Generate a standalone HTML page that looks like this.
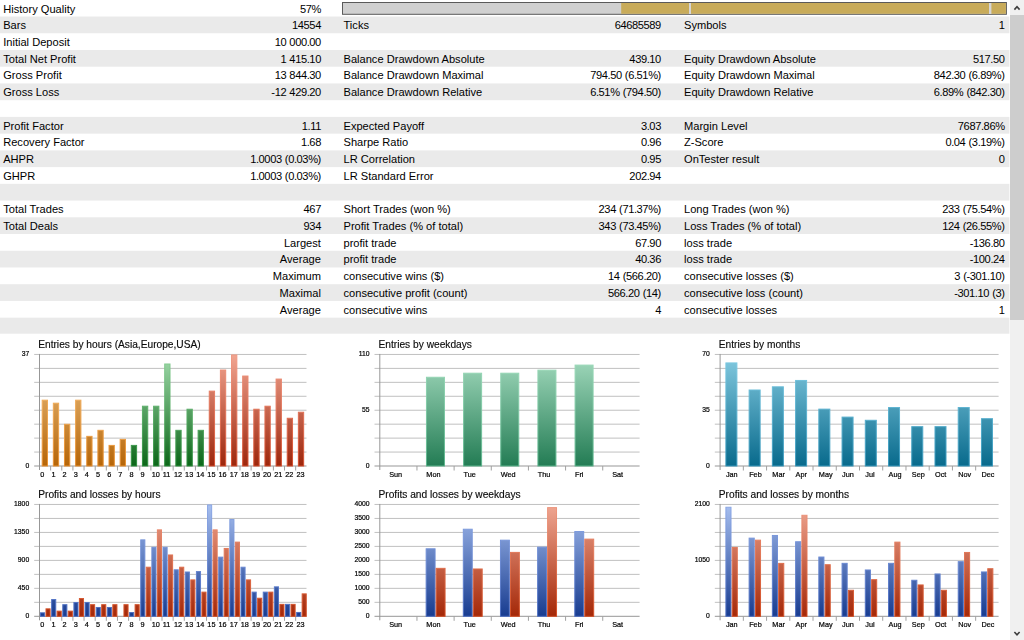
<!DOCTYPE html>
<html lang="en">
<head>
<meta charset="utf-8">
<title>Strategy Tester Report</title>
<style>
html,body{margin:0;padding:0;background:#fff;}
body{width:1024px;height:640px;overflow:hidden;position:relative;font-family:"Liberation Sans",Arial,sans-serif;color:#000;}
#gfx{position:absolute;left:0;top:0;width:1024px;height:640px;display:block;filter:blur(0.3px);}
#report{position:absolute;left:0;top:0;width:1024px;height:335px;font-size:11.1px;}
.row{position:absolute;left:0;width:1009px;height:16.73px;line-height:16.73px;white-space:nowrap;}
.row span{position:absolute;top:0.7px;}
.row .n{letter-spacing:-0.4px;word-spacing:0.5px;}
.ct{font-family:"Liberation Sans",Arial,sans-serif;font-size:10.2px;fill:#0c0c0c;stroke:#0c0c0c;stroke-width:0.15px;}
.yl{font-size:6.8px !important;}
.al{font-family:"Liberation Sans",Arial,sans-serif;font-size:7.3px;fill:#000;stroke:#000;stroke-width:0.2px;}
</style>
</head>
<body>
<svg id="gfx" width="1024" height="640" viewBox="0 0 1024 640">
<defs>
<linearGradient id="ora" gradientUnits="userSpaceOnUse" x1="0" y1="354" x2="0" y2="466"><stop offset="0" stop-color="#f2c88c"/><stop offset="1" stop-color="#b56508"/></linearGradient>
<linearGradient id="gra" gradientUnits="userSpaceOnUse" x1="0" y1="354" x2="0" y2="466"><stop offset="0" stop-color="#a4dcae"/><stop offset="1" stop-color="#0b6618"/></linearGradient>
<linearGradient id="rda" gradientUnits="userSpaceOnUse" x1="0" y1="354" x2="0" y2="466"><stop offset="0" stop-color="#f2a692"/><stop offset="1" stop-color="#9c260c"/></linearGradient>
<linearGradient id="wka" gradientUnits="userSpaceOnUse" x1="0" y1="354" x2="0" y2="466"><stop offset="0" stop-color="#a6dcc0"/><stop offset="1" stop-color="#237c54"/></linearGradient>
<linearGradient id="moa" gradientUnits="userSpaceOnUse" x1="0" y1="354" x2="0" y2="466"><stop offset="0" stop-color="#86cce2"/><stop offset="1" stop-color="#086a8c"/></linearGradient>
<linearGradient id="bla" gradientUnits="userSpaceOnUse" x1="0" y1="354" x2="0" y2="466"><stop offset="0" stop-color="#a8c0f0"/><stop offset="1" stop-color="#183c90"/></linearGradient>
<linearGradient id="lra" gradientUnits="userSpaceOnUse" x1="0" y1="354" x2="0" y2="466"><stop offset="0" stop-color="#f0a894"/><stop offset="1" stop-color="#a42808"/></linearGradient>
<linearGradient id="blSa" gradientUnits="userSpaceOnUse" x1="0" y1="354" x2="0" y2="466"><stop offset="0" stop-color="#8ca8e6"/><stop offset="1" stop-color="#4a6cc0"/></linearGradient>
<linearGradient id="lrSa" gradientUnits="userSpaceOnUse" x1="0" y1="354" x2="0" y2="466"><stop offset="0" stop-color="#ee9880"/><stop offset="1" stop-color="#d24c22"/></linearGradient>
<linearGradient id="orSa" gradientUnits="userSpaceOnUse" x1="0" y1="354" x2="0" y2="466"><stop offset="0" stop-color="#f6c078"/><stop offset="1" stop-color="#e89030"/></linearGradient>
<linearGradient id="grSa" gradientUnits="userSpaceOnUse" x1="0" y1="354" x2="0" y2="466"><stop offset="0" stop-color="#8cd098"/><stop offset="1" stop-color="#2c8c3c"/></linearGradient>
<linearGradient id="rdSa" gradientUnits="userSpaceOnUse" x1="0" y1="354" x2="0" y2="466"><stop offset="0" stop-color="#f09a84"/><stop offset="1" stop-color="#d44c2c"/></linearGradient>
<linearGradient id="wkSa" gradientUnits="userSpaceOnUse" x1="0" y1="354" x2="0" y2="466"><stop offset="0" stop-color="#a0dcbc"/><stop offset="1" stop-color="#5cb48c"/></linearGradient>
<linearGradient id="moSa" gradientUnits="userSpaceOnUse" x1="0" y1="354" x2="0" y2="466"><stop offset="0" stop-color="#80cce4"/><stop offset="1" stop-color="#3898bc"/></linearGradient>
<linearGradient id="orb" gradientUnits="userSpaceOnUse" x1="0" y1="504" x2="0" y2="616"><stop offset="0" stop-color="#f2c88c"/><stop offset="1" stop-color="#b56508"/></linearGradient>
<linearGradient id="grb" gradientUnits="userSpaceOnUse" x1="0" y1="504" x2="0" y2="616"><stop offset="0" stop-color="#a4dcae"/><stop offset="1" stop-color="#0b6618"/></linearGradient>
<linearGradient id="rdb" gradientUnits="userSpaceOnUse" x1="0" y1="504" x2="0" y2="616"><stop offset="0" stop-color="#f2a692"/><stop offset="1" stop-color="#9c260c"/></linearGradient>
<linearGradient id="wkb" gradientUnits="userSpaceOnUse" x1="0" y1="504" x2="0" y2="616"><stop offset="0" stop-color="#a6dcc0"/><stop offset="1" stop-color="#237c54"/></linearGradient>
<linearGradient id="mob" gradientUnits="userSpaceOnUse" x1="0" y1="504" x2="0" y2="616"><stop offset="0" stop-color="#86cce2"/><stop offset="1" stop-color="#086a8c"/></linearGradient>
<linearGradient id="blb" gradientUnits="userSpaceOnUse" x1="0" y1="504" x2="0" y2="616"><stop offset="0" stop-color="#a8c0f0"/><stop offset="1" stop-color="#183c90"/></linearGradient>
<linearGradient id="lrb" gradientUnits="userSpaceOnUse" x1="0" y1="504" x2="0" y2="616"><stop offset="0" stop-color="#f0a894"/><stop offset="1" stop-color="#a42808"/></linearGradient>
<linearGradient id="blSb" gradientUnits="userSpaceOnUse" x1="0" y1="504" x2="0" y2="616"><stop offset="0" stop-color="#8ca8e6"/><stop offset="1" stop-color="#4a6cc0"/></linearGradient>
<linearGradient id="lrSb" gradientUnits="userSpaceOnUse" x1="0" y1="504" x2="0" y2="616"><stop offset="0" stop-color="#ee9880"/><stop offset="1" stop-color="#d24c22"/></linearGradient>
<linearGradient id="orSb" gradientUnits="userSpaceOnUse" x1="0" y1="504" x2="0" y2="616"><stop offset="0" stop-color="#f6c078"/><stop offset="1" stop-color="#e89030"/></linearGradient>
<linearGradient id="grSb" gradientUnits="userSpaceOnUse" x1="0" y1="504" x2="0" y2="616"><stop offset="0" stop-color="#8cd098"/><stop offset="1" stop-color="#2c8c3c"/></linearGradient>
<linearGradient id="rdSb" gradientUnits="userSpaceOnUse" x1="0" y1="504" x2="0" y2="616"><stop offset="0" stop-color="#f09a84"/><stop offset="1" stop-color="#d44c2c"/></linearGradient>
<linearGradient id="wkSb" gradientUnits="userSpaceOnUse" x1="0" y1="504" x2="0" y2="616"><stop offset="0" stop-color="#a0dcbc"/><stop offset="1" stop-color="#5cb48c"/></linearGradient>
<linearGradient id="moSb" gradientUnits="userSpaceOnUse" x1="0" y1="504" x2="0" y2="616"><stop offset="0" stop-color="#80cce4"/><stop offset="1" stop-color="#3898bc"/></linearGradient>
</defs>
<rect x="0" y="16.53" width="1009.4" height="16.73" fill="#eaeaea"/>
<rect x="0" y="49.99" width="1009.4" height="16.73" fill="#eaeaea"/>
<rect x="0" y="83.45" width="1009.4" height="16.73" fill="#eaeaea"/>
<rect x="0" y="116.91" width="1009.4" height="16.73" fill="#eaeaea"/>
<rect x="0" y="150.37" width="1009.4" height="16.73" fill="#eaeaea"/>
<rect x="0" y="183.83" width="1009.4" height="16.73" fill="#eaeaea"/>
<rect x="0" y="217.29" width="1009.4" height="16.73" fill="#eaeaea"/>
<rect x="0" y="250.75" width="1009.4" height="16.73" fill="#eaeaea"/>
<rect x="0" y="284.21" width="1009.4" height="16.73" fill="#eaeaea"/>
<rect x="0" y="317.67" width="1009.4" height="16.03" fill="#eaeaea"/>
<rect x="342.5" y="2.5" width="663.9" height="11.8" fill="#d0d0d0" stroke="#5a5a5a" stroke-width="1"/>
<rect x="621.2" y="3" width="384.7" height="10.8" fill="#c8ab5a"/>
<rect x="689" y="3" width="2" height="11" fill="#d6d6d6"/>
<rect x="989" y="3" width="2.4" height="11" fill="#d6d6d6"/>
<rect x="1010" y="0" width="14" height="640" fill="#f0f0f0"/>
<rect x="1010" y="15" width="14" height="305" fill="#cdcdcd"/>
<path d="M1014.4 9.6 L1017 6.8 L1019.6 9.6" fill="none" stroke="#3c3c3c" stroke-width="1.6"/>
<path d="M1014.4 632 L1017 634.8 L1019.6 632" fill="none" stroke="#3c3c3c" stroke-width="1.6"/>
<text x="38.2" y="348.25" class="ct">Entries by hours (Asia,Europe,USA)</text>
<line x1="34.2" y1="354.45" x2="306.5" y2="354.45" stroke="#c0c0c0" stroke-width="1"/>
<line x1="34.2" y1="368.39" x2="306.5" y2="368.39" stroke="#c0c0c0" stroke-width="1"/>
<line x1="34.2" y1="382.34" x2="306.5" y2="382.34" stroke="#c0c0c0" stroke-width="1"/>
<line x1="34.2" y1="396.28" x2="306.5" y2="396.28" stroke="#c0c0c0" stroke-width="1"/>
<line x1="34.2" y1="410.23" x2="306.5" y2="410.23" stroke="#c0c0c0" stroke-width="1"/>
<line x1="34.2" y1="424.17" x2="306.5" y2="424.17" stroke="#c0c0c0" stroke-width="1"/>
<line x1="34.2" y1="438.11" x2="306.5" y2="438.11" stroke="#c0c0c0" stroke-width="1"/>
<line x1="34.2" y1="452.06" x2="306.5" y2="452.06" stroke="#c0c0c0" stroke-width="1"/>
<line x1="34.2" y1="466" x2="306.5" y2="466" stroke="#979797" stroke-width="1"/>
<line x1="39.5" y1="353.95" x2="39.5" y2="470" stroke="#979797" stroke-width="1"/>
<line x1="50.64" y1="466" x2="50.64" y2="470.5" stroke="#a0a0a0" stroke-width="1"/>
<line x1="61.78" y1="466" x2="61.78" y2="470.5" stroke="#a0a0a0" stroke-width="1"/>
<line x1="72.91" y1="466" x2="72.91" y2="470.5" stroke="#a0a0a0" stroke-width="1"/>
<line x1="84.05" y1="466" x2="84.05" y2="470.5" stroke="#a0a0a0" stroke-width="1"/>
<line x1="95.19" y1="466" x2="95.19" y2="470.5" stroke="#a0a0a0" stroke-width="1"/>
<line x1="106.33" y1="466" x2="106.33" y2="470.5" stroke="#a0a0a0" stroke-width="1"/>
<line x1="117.46" y1="466" x2="117.46" y2="470.5" stroke="#a0a0a0" stroke-width="1"/>
<line x1="128.6" y1="466" x2="128.6" y2="470.5" stroke="#a0a0a0" stroke-width="1"/>
<line x1="139.74" y1="466" x2="139.74" y2="470.5" stroke="#a0a0a0" stroke-width="1"/>
<line x1="150.88" y1="466" x2="150.88" y2="470.5" stroke="#a0a0a0" stroke-width="1"/>
<line x1="162.01" y1="466" x2="162.01" y2="470.5" stroke="#a0a0a0" stroke-width="1"/>
<line x1="173.15" y1="466" x2="173.15" y2="470.5" stroke="#a0a0a0" stroke-width="1"/>
<line x1="184.29" y1="466" x2="184.29" y2="470.5" stroke="#a0a0a0" stroke-width="1"/>
<line x1="195.43" y1="466" x2="195.43" y2="470.5" stroke="#a0a0a0" stroke-width="1"/>
<line x1="206.56" y1="466" x2="206.56" y2="470.5" stroke="#a0a0a0" stroke-width="1"/>
<line x1="217.7" y1="466" x2="217.7" y2="470.5" stroke="#a0a0a0" stroke-width="1"/>
<line x1="228.84" y1="466" x2="228.84" y2="470.5" stroke="#a0a0a0" stroke-width="1"/>
<line x1="239.98" y1="466" x2="239.98" y2="470.5" stroke="#a0a0a0" stroke-width="1"/>
<line x1="251.11" y1="466" x2="251.11" y2="470.5" stroke="#a0a0a0" stroke-width="1"/>
<line x1="262.25" y1="466" x2="262.25" y2="470.5" stroke="#a0a0a0" stroke-width="1"/>
<line x1="273.39" y1="466" x2="273.39" y2="470.5" stroke="#a0a0a0" stroke-width="1"/>
<line x1="284.53" y1="466" x2="284.53" y2="470.5" stroke="#a0a0a0" stroke-width="1"/>
<line x1="295.66" y1="466" x2="295.66" y2="470.5" stroke="#a0a0a0" stroke-width="1"/>
<text x="29.2" y="356.15" class="al yl" text-anchor="end">37</text>
<text x="29.2" y="467.7" class="al yl" text-anchor="end">0</text>
<rect x="42.2" y="400.17" width="5.3" height="65.83" fill="url(#ora)" stroke="url(#orSa)" stroke-width="1"/>
<rect x="53.34" y="403.19" width="5.3" height="62.81" fill="url(#ora)" stroke="url(#orSa)" stroke-width="1"/>
<rect x="64.48" y="424.29" width="5.3" height="41.71" fill="url(#ora)" stroke="url(#orSa)" stroke-width="1"/>
<rect x="75.61" y="400.17" width="5.3" height="65.83" fill="url(#ora)" stroke="url(#orSa)" stroke-width="1"/>
<rect x="86.75" y="436.35" width="5.3" height="29.65" fill="url(#ora)" stroke="url(#orSa)" stroke-width="1"/>
<rect x="97.89" y="430.32" width="5.3" height="35.68" fill="url(#ora)" stroke="url(#orSa)" stroke-width="1"/>
<rect x="109.03" y="445.4" width="5.3" height="20.6" fill="url(#ora)" stroke="url(#orSa)" stroke-width="1"/>
<rect x="120.16" y="439.37" width="5.3" height="26.63" fill="url(#ora)" stroke="url(#orSa)" stroke-width="1"/>
<rect x="131.3" y="445.4" width="5.3" height="20.6" fill="url(#gra)" stroke="url(#grSa)" stroke-width="1"/>
<rect x="142.44" y="406.2" width="5.3" height="59.8" fill="url(#gra)" stroke="url(#grSa)" stroke-width="1"/>
<rect x="153.58" y="406.2" width="5.3" height="59.8" fill="url(#gra)" stroke="url(#grSa)" stroke-width="1"/>
<rect x="164.71" y="363.99" width="5.3" height="102.01" fill="url(#gra)" stroke="url(#grSa)" stroke-width="1"/>
<rect x="175.85" y="430.32" width="5.3" height="35.68" fill="url(#gra)" stroke="url(#grSa)" stroke-width="1"/>
<rect x="186.99" y="409.22" width="5.3" height="56.78" fill="url(#gra)" stroke="url(#grSa)" stroke-width="1"/>
<rect x="198.12" y="430.32" width="5.3" height="35.68" fill="url(#gra)" stroke="url(#grSa)" stroke-width="1"/>
<rect x="209.26" y="391.13" width="5.3" height="74.87" fill="url(#rda)" stroke="url(#rdSa)" stroke-width="1"/>
<rect x="220.4" y="370.02" width="5.3" height="95.98" fill="url(#rda)" stroke="url(#rdSa)" stroke-width="1"/>
<rect x="231.54" y="354.95" width="5.3" height="111.05" fill="url(#rda)" stroke="url(#rdSa)" stroke-width="1"/>
<rect x="242.68" y="376.05" width="5.3" height="89.95" fill="url(#rda)" stroke="url(#rdSa)" stroke-width="1"/>
<rect x="253.81" y="409.22" width="5.3" height="56.78" fill="url(#rda)" stroke="url(#rdSa)" stroke-width="1"/>
<rect x="264.95" y="406.2" width="5.3" height="59.8" fill="url(#rda)" stroke="url(#rdSa)" stroke-width="1"/>
<rect x="276.09" y="379.07" width="5.3" height="86.93" fill="url(#rda)" stroke="url(#rdSa)" stroke-width="1"/>
<rect x="287.23" y="418.26" width="5.3" height="47.74" fill="url(#rda)" stroke="url(#rdSa)" stroke-width="1"/>
<rect x="298.36" y="412.23" width="5.3" height="53.77" fill="url(#rda)" stroke="url(#rdSa)" stroke-width="1"/>
<text x="40.3" y="476.5" class="al">0</text>
<text x="51.44" y="476.5" class="al">1</text>
<text x="62.58" y="476.5" class="al">2</text>
<text x="73.71" y="476.5" class="al">3</text>
<text x="84.85" y="476.5" class="al">4</text>
<text x="95.99" y="476.5" class="al">5</text>
<text x="107.13" y="476.5" class="al">6</text>
<text x="118.26" y="476.5" class="al">7</text>
<text x="129.4" y="476.5" class="al">8</text>
<text x="140.54" y="476.5" class="al">9</text>
<text x="151.68" y="476.5" class="al">10</text>
<text x="162.81" y="476.5" class="al">11</text>
<text x="173.95" y="476.5" class="al">12</text>
<text x="185.09" y="476.5" class="al">13</text>
<text x="196.22" y="476.5" class="al">14</text>
<text x="207.36" y="476.5" class="al">15</text>
<text x="218.5" y="476.5" class="al">16</text>
<text x="229.64" y="476.5" class="al">17</text>
<text x="240.78" y="476.5" class="al">18</text>
<text x="251.91" y="476.5" class="al">19</text>
<text x="263.05" y="476.5" class="al">20</text>
<text x="274.19" y="476.5" class="al">21</text>
<text x="285.32" y="476.5" class="al">22</text>
<text x="296.46" y="476.5" class="al">23</text>
<text x="378.5" y="348.25" class="ct">Entries by weekdays</text>
<line x1="374.5" y1="354.45" x2="639.6" y2="354.45" stroke="#c0c0c0" stroke-width="1"/>
<line x1="374.5" y1="368.39" x2="639.6" y2="368.39" stroke="#c0c0c0" stroke-width="1"/>
<line x1="374.5" y1="382.34" x2="639.6" y2="382.34" stroke="#c0c0c0" stroke-width="1"/>
<line x1="374.5" y1="396.28" x2="639.6" y2="396.28" stroke="#c0c0c0" stroke-width="1"/>
<line x1="374.5" y1="410.23" x2="639.6" y2="410.23" stroke="#c0c0c0" stroke-width="1"/>
<line x1="374.5" y1="424.17" x2="639.6" y2="424.17" stroke="#c0c0c0" stroke-width="1"/>
<line x1="374.5" y1="438.11" x2="639.6" y2="438.11" stroke="#c0c0c0" stroke-width="1"/>
<line x1="374.5" y1="452.06" x2="639.6" y2="452.06" stroke="#c0c0c0" stroke-width="1"/>
<line x1="374.5" y1="466" x2="639.6" y2="466" stroke="#979797" stroke-width="1"/>
<line x1="379.8" y1="353.95" x2="379.8" y2="470" stroke="#979797" stroke-width="1"/>
<line x1="416.96" y1="466" x2="416.96" y2="470.5" stroke="#a0a0a0" stroke-width="1"/>
<line x1="454.11" y1="466" x2="454.11" y2="470.5" stroke="#a0a0a0" stroke-width="1"/>
<line x1="491.27" y1="466" x2="491.27" y2="470.5" stroke="#a0a0a0" stroke-width="1"/>
<line x1="528.43" y1="466" x2="528.43" y2="470.5" stroke="#a0a0a0" stroke-width="1"/>
<line x1="565.59" y1="466" x2="565.59" y2="470.5" stroke="#a0a0a0" stroke-width="1"/>
<line x1="602.74" y1="466" x2="602.74" y2="470.5" stroke="#a0a0a0" stroke-width="1"/>
<text x="369.5" y="356.15" class="al yl" text-anchor="end">110</text>
<text x="369.5" y="411.93" class="al yl" text-anchor="end">55</text>
<text x="369.5" y="467.7" class="al yl" text-anchor="end">0</text>
<rect x="426.46" y="377.26" width="18" height="88.74" fill="url(#wka)" stroke="url(#wkSa)" stroke-width="1"/>
<rect x="463.61" y="373.2" width="18" height="92.8" fill="url(#wka)" stroke="url(#wkSa)" stroke-width="1"/>
<rect x="500.77" y="373.2" width="18" height="92.8" fill="url(#wka)" stroke="url(#wkSa)" stroke-width="1"/>
<rect x="537.93" y="370.16" width="18" height="95.84" fill="url(#wka)" stroke="url(#wkSa)" stroke-width="1"/>
<rect x="575.09" y="365.09" width="18" height="100.91" fill="url(#wka)" stroke="url(#wkSa)" stroke-width="1"/>
<text x="389.2" y="476.5" class="al">Sun</text>
<text x="426.36" y="476.5" class="al">Mon</text>
<text x="463.51" y="476.5" class="al">Tue</text>
<text x="500.67" y="476.5" class="al">Wed</text>
<text x="537.83" y="476.5" class="al">Thu</text>
<text x="574.99" y="476.5" class="al">Fri</text>
<text x="612.14" y="476.5" class="al">Sat</text>
<text x="718.8" y="348.25" class="ct">Entries by months</text>
<line x1="714.8" y1="354.45" x2="998.6" y2="354.45" stroke="#c0c0c0" stroke-width="1"/>
<line x1="714.8" y1="368.39" x2="998.6" y2="368.39" stroke="#c0c0c0" stroke-width="1"/>
<line x1="714.8" y1="382.34" x2="998.6" y2="382.34" stroke="#c0c0c0" stroke-width="1"/>
<line x1="714.8" y1="396.28" x2="998.6" y2="396.28" stroke="#c0c0c0" stroke-width="1"/>
<line x1="714.8" y1="410.23" x2="998.6" y2="410.23" stroke="#c0c0c0" stroke-width="1"/>
<line x1="714.8" y1="424.17" x2="998.6" y2="424.17" stroke="#c0c0c0" stroke-width="1"/>
<line x1="714.8" y1="438.11" x2="998.6" y2="438.11" stroke="#c0c0c0" stroke-width="1"/>
<line x1="714.8" y1="452.06" x2="998.6" y2="452.06" stroke="#c0c0c0" stroke-width="1"/>
<line x1="714.8" y1="466" x2="998.6" y2="466" stroke="#979797" stroke-width="1"/>
<line x1="720.1" y1="353.95" x2="720.1" y2="470" stroke="#979797" stroke-width="1"/>
<line x1="743.33" y1="466" x2="743.33" y2="470.5" stroke="#a0a0a0" stroke-width="1"/>
<line x1="766.57" y1="466" x2="766.57" y2="470.5" stroke="#a0a0a0" stroke-width="1"/>
<line x1="789.8" y1="466" x2="789.8" y2="470.5" stroke="#a0a0a0" stroke-width="1"/>
<line x1="813.03" y1="466" x2="813.03" y2="470.5" stroke="#a0a0a0" stroke-width="1"/>
<line x1="836.27" y1="466" x2="836.27" y2="470.5" stroke="#a0a0a0" stroke-width="1"/>
<line x1="859.5" y1="466" x2="859.5" y2="470.5" stroke="#a0a0a0" stroke-width="1"/>
<line x1="882.73" y1="466" x2="882.73" y2="470.5" stroke="#a0a0a0" stroke-width="1"/>
<line x1="905.97" y1="466" x2="905.97" y2="470.5" stroke="#a0a0a0" stroke-width="1"/>
<line x1="929.2" y1="466" x2="929.2" y2="470.5" stroke="#a0a0a0" stroke-width="1"/>
<line x1="952.43" y1="466" x2="952.43" y2="470.5" stroke="#a0a0a0" stroke-width="1"/>
<line x1="975.67" y1="466" x2="975.67" y2="470.5" stroke="#a0a0a0" stroke-width="1"/>
<text x="709.8" y="356.15" class="al yl" text-anchor="end">70</text>
<text x="709.8" y="411.93" class="al yl" text-anchor="end">35</text>
<text x="709.8" y="467.7" class="al yl" text-anchor="end">0</text>
<rect x="725.9" y="362.92" width="11" height="103.08" fill="url(#moa)" stroke="url(#moSa)" stroke-width="1"/>
<rect x="749.13" y="390.01" width="11" height="75.99" fill="url(#moa)" stroke="url(#moSa)" stroke-width="1"/>
<rect x="772.37" y="386.82" width="11" height="79.18" fill="url(#moa)" stroke="url(#moSa)" stroke-width="1"/>
<rect x="795.6" y="380.45" width="11" height="85.55" fill="url(#moa)" stroke="url(#moSa)" stroke-width="1"/>
<rect x="818.83" y="409.13" width="11" height="56.87" fill="url(#moa)" stroke="url(#moSa)" stroke-width="1"/>
<rect x="842.07" y="417.1" width="11" height="48.9" fill="url(#moa)" stroke="url(#moSa)" stroke-width="1"/>
<rect x="865.3" y="420.29" width="11" height="45.71" fill="url(#moa)" stroke="url(#moSa)" stroke-width="1"/>
<rect x="888.53" y="407.54" width="11" height="58.46" fill="url(#moa)" stroke="url(#moSa)" stroke-width="1"/>
<rect x="911.77" y="426.66" width="11" height="39.34" fill="url(#moa)" stroke="url(#moSa)" stroke-width="1"/>
<rect x="935" y="426.66" width="11" height="39.34" fill="url(#moa)" stroke="url(#moSa)" stroke-width="1"/>
<rect x="958.23" y="407.54" width="11" height="58.46" fill="url(#moa)" stroke="url(#moSa)" stroke-width="1"/>
<rect x="981.47" y="418.69" width="11" height="47.31" fill="url(#moa)" stroke="url(#moSa)" stroke-width="1"/>
<text x="725.9" y="476.5" class="al">Jan</text>
<text x="749.13" y="476.5" class="al">Feb</text>
<text x="772.37" y="476.5" class="al">Mar</text>
<text x="795.6" y="476.5" class="al">Apr</text>
<text x="818.83" y="476.5" class="al">May</text>
<text x="842.07" y="476.5" class="al">Jun</text>
<text x="865.3" y="476.5" class="al">Jul</text>
<text x="888.53" y="476.5" class="al">Aug</text>
<text x="911.77" y="476.5" class="al">Sep</text>
<text x="935" y="476.5" class="al">Oct</text>
<text x="958.23" y="476.5" class="al">Nov</text>
<text x="981.47" y="476.5" class="al">Dec</text>
<text x="38.2" y="498.25" class="ct">Profits and losses by hours</text>
<line x1="34.2" y1="504.45" x2="306.5" y2="504.45" stroke="#c0c0c0" stroke-width="1"/>
<line x1="34.2" y1="518.43" x2="306.5" y2="518.43" stroke="#c0c0c0" stroke-width="1"/>
<line x1="34.2" y1="532.41" x2="306.5" y2="532.41" stroke="#c0c0c0" stroke-width="1"/>
<line x1="34.2" y1="546.39" x2="306.5" y2="546.39" stroke="#c0c0c0" stroke-width="1"/>
<line x1="34.2" y1="560.38" x2="306.5" y2="560.38" stroke="#c0c0c0" stroke-width="1"/>
<line x1="34.2" y1="574.36" x2="306.5" y2="574.36" stroke="#c0c0c0" stroke-width="1"/>
<line x1="34.2" y1="588.34" x2="306.5" y2="588.34" stroke="#c0c0c0" stroke-width="1"/>
<line x1="34.2" y1="602.32" x2="306.5" y2="602.32" stroke="#c0c0c0" stroke-width="1"/>
<line x1="34.2" y1="616.3" x2="306.5" y2="616.3" stroke="#979797" stroke-width="1"/>
<line x1="39.5" y1="503.95" x2="39.5" y2="620.3" stroke="#979797" stroke-width="1"/>
<line x1="50.64" y1="616.3" x2="50.64" y2="620.8" stroke="#a0a0a0" stroke-width="1"/>
<line x1="61.78" y1="616.3" x2="61.78" y2="620.8" stroke="#a0a0a0" stroke-width="1"/>
<line x1="72.91" y1="616.3" x2="72.91" y2="620.8" stroke="#a0a0a0" stroke-width="1"/>
<line x1="84.05" y1="616.3" x2="84.05" y2="620.8" stroke="#a0a0a0" stroke-width="1"/>
<line x1="95.19" y1="616.3" x2="95.19" y2="620.8" stroke="#a0a0a0" stroke-width="1"/>
<line x1="106.33" y1="616.3" x2="106.33" y2="620.8" stroke="#a0a0a0" stroke-width="1"/>
<line x1="117.46" y1="616.3" x2="117.46" y2="620.8" stroke="#a0a0a0" stroke-width="1"/>
<line x1="128.6" y1="616.3" x2="128.6" y2="620.8" stroke="#a0a0a0" stroke-width="1"/>
<line x1="139.74" y1="616.3" x2="139.74" y2="620.8" stroke="#a0a0a0" stroke-width="1"/>
<line x1="150.88" y1="616.3" x2="150.88" y2="620.8" stroke="#a0a0a0" stroke-width="1"/>
<line x1="162.01" y1="616.3" x2="162.01" y2="620.8" stroke="#a0a0a0" stroke-width="1"/>
<line x1="173.15" y1="616.3" x2="173.15" y2="620.8" stroke="#a0a0a0" stroke-width="1"/>
<line x1="184.29" y1="616.3" x2="184.29" y2="620.8" stroke="#a0a0a0" stroke-width="1"/>
<line x1="195.43" y1="616.3" x2="195.43" y2="620.8" stroke="#a0a0a0" stroke-width="1"/>
<line x1="206.56" y1="616.3" x2="206.56" y2="620.8" stroke="#a0a0a0" stroke-width="1"/>
<line x1="217.7" y1="616.3" x2="217.7" y2="620.8" stroke="#a0a0a0" stroke-width="1"/>
<line x1="228.84" y1="616.3" x2="228.84" y2="620.8" stroke="#a0a0a0" stroke-width="1"/>
<line x1="239.98" y1="616.3" x2="239.98" y2="620.8" stroke="#a0a0a0" stroke-width="1"/>
<line x1="251.11" y1="616.3" x2="251.11" y2="620.8" stroke="#a0a0a0" stroke-width="1"/>
<line x1="262.25" y1="616.3" x2="262.25" y2="620.8" stroke="#a0a0a0" stroke-width="1"/>
<line x1="273.39" y1="616.3" x2="273.39" y2="620.8" stroke="#a0a0a0" stroke-width="1"/>
<line x1="284.53" y1="616.3" x2="284.53" y2="620.8" stroke="#a0a0a0" stroke-width="1"/>
<line x1="295.66" y1="616.3" x2="295.66" y2="620.8" stroke="#a0a0a0" stroke-width="1"/>
<text x="29.2" y="506.15" class="al yl" text-anchor="end">1800</text>
<text x="29.2" y="534.11" class="al yl" text-anchor="end">1350</text>
<text x="29.2" y="562.08" class="al yl" text-anchor="end">900</text>
<text x="29.2" y="590.04" class="al yl" text-anchor="end">450</text>
<text x="29.2" y="618" class="al yl" text-anchor="end">0</text>
<rect x="40.5" y="612.82" width="4.1" height="3.48" fill="url(#blb)" stroke="url(#blSb)" stroke-width="1"/>
<rect x="51.64" y="599.53" width="4.1" height="16.77" fill="url(#blb)" stroke="url(#blSb)" stroke-width="1"/>
<rect x="62.78" y="604.68" width="4.1" height="11.62" fill="url(#blb)" stroke="url(#blSb)" stroke-width="1"/>
<rect x="73.91" y="602.51" width="4.1" height="13.79" fill="url(#blb)" stroke="url(#blSb)" stroke-width="1"/>
<rect x="85.05" y="602.51" width="4.1" height="13.79" fill="url(#blb)" stroke="url(#blSb)" stroke-width="1"/>
<rect x="96.19" y="607.48" width="4.1" height="8.82" fill="url(#blb)" stroke="url(#blSb)" stroke-width="1"/>
<rect x="107.33" y="607.48" width="4.1" height="8.82" fill="url(#blb)" stroke="url(#blSb)" stroke-width="1"/>
<rect x="129.6" y="612.57" width="4.1" height="3.73" fill="url(#blb)" stroke="url(#blSb)" stroke-width="1"/>
<rect x="140.74" y="539.87" width="4.1" height="76.43" fill="url(#blb)" stroke="url(#blSb)" stroke-width="1"/>
<rect x="151.88" y="547.33" width="4.1" height="68.97" fill="url(#blb)" stroke="url(#blSb)" stroke-width="1"/>
<rect x="163.01" y="547.33" width="4.1" height="68.97" fill="url(#blb)" stroke="url(#blSb)" stroke-width="1"/>
<rect x="174.15" y="569.82" width="4.1" height="46.48" fill="url(#blb)" stroke="url(#blSb)" stroke-width="1"/>
<rect x="185.29" y="572" width="4.1" height="44.3" fill="url(#blb)" stroke="url(#blSb)" stroke-width="1"/>
<rect x="196.43" y="571.56" width="4.1" height="44.74" fill="url(#blb)" stroke="url(#blSb)" stroke-width="1"/>
<rect x="207.56" y="504.95" width="4.1" height="111.35" fill="url(#blb)" stroke="url(#blSb)" stroke-width="1"/>
<rect x="218.7" y="557.15" width="4.1" height="59.15" fill="url(#blb)" stroke="url(#blSb)" stroke-width="1"/>
<rect x="229.84" y="519.55" width="4.1" height="96.75" fill="url(#blb)" stroke="url(#blSb)" stroke-width="1"/>
<rect x="240.98" y="567.21" width="4.1" height="49.09" fill="url(#blb)" stroke="url(#blSb)" stroke-width="1"/>
<rect x="252.11" y="592.13" width="4.1" height="24.17" fill="url(#blb)" stroke="url(#blSb)" stroke-width="1"/>
<rect x="263.25" y="592.13" width="4.1" height="24.17" fill="url(#blb)" stroke="url(#blSb)" stroke-width="1"/>
<rect x="274.39" y="586.85" width="4.1" height="29.45" fill="url(#blb)" stroke="url(#blSb)" stroke-width="1"/>
<rect x="285.53" y="604.37" width="4.1" height="11.93" fill="url(#blb)" stroke="url(#blSb)" stroke-width="1"/>
<rect x="296.66" y="612.45" width="4.1" height="3.85" fill="url(#blb)" stroke="url(#blSb)" stroke-width="1"/>
<rect x="46" y="608.85" width="4.1" height="7.45" fill="url(#lrb)" stroke="url(#lrSb)" stroke-width="1"/>
<rect x="57.14" y="611.15" width="4.1" height="5.15" fill="url(#lrb)" stroke="url(#lrSb)" stroke-width="1"/>
<rect x="68.28" y="611.15" width="4.1" height="5.15" fill="url(#lrb)" stroke="url(#lrSb)" stroke-width="1"/>
<rect x="79.41" y="598.53" width="4.1" height="17.77" fill="url(#lrb)" stroke="url(#lrSb)" stroke-width="1"/>
<rect x="90.55" y="604.68" width="4.1" height="11.62" fill="url(#lrb)" stroke="url(#lrSb)" stroke-width="1"/>
<rect x="101.69" y="604.68" width="4.1" height="11.62" fill="url(#lrb)" stroke="url(#lrSb)" stroke-width="1"/>
<rect x="112.83" y="604.68" width="4.1" height="11.62" fill="url(#lrb)" stroke="url(#lrSb)" stroke-width="1"/>
<rect x="123.96" y="604.68" width="4.1" height="11.62" fill="url(#lrb)" stroke="url(#lrSb)" stroke-width="1"/>
<rect x="135.1" y="604.68" width="4.1" height="11.62" fill="url(#lrb)" stroke="url(#lrSb)" stroke-width="1"/>
<rect x="146.24" y="567.21" width="4.1" height="49.09" fill="url(#lrb)" stroke="url(#lrSb)" stroke-width="1"/>
<rect x="157.38" y="529.87" width="4.1" height="86.43" fill="url(#lrb)" stroke="url(#lrSb)" stroke-width="1"/>
<rect x="168.51" y="554.97" width="4.1" height="61.33" fill="url(#lrb)" stroke="url(#lrSb)" stroke-width="1"/>
<rect x="179.65" y="567.21" width="4.1" height="49.09" fill="url(#lrb)" stroke="url(#lrSb)" stroke-width="1"/>
<rect x="190.79" y="579.89" width="4.1" height="36.41" fill="url(#lrb)" stroke="url(#lrSb)" stroke-width="1"/>
<rect x="201.93" y="592.13" width="4.1" height="24.17" fill="url(#lrb)" stroke="url(#lrSb)" stroke-width="1"/>
<rect x="213.06" y="529.87" width="4.1" height="86.43" fill="url(#lrb)" stroke="url(#lrSb)" stroke-width="1"/>
<rect x="224.2" y="548.45" width="4.1" height="67.85" fill="url(#lrb)" stroke="url(#lrSb)" stroke-width="1"/>
<rect x="235.34" y="542.11" width="4.1" height="74.19" fill="url(#lrb)" stroke="url(#lrSb)" stroke-width="1"/>
<rect x="246.48" y="579.89" width="4.1" height="36.41" fill="url(#lrb)" stroke="url(#lrSb)" stroke-width="1"/>
<rect x="257.61" y="598.22" width="4.1" height="18.08" fill="url(#lrb)" stroke="url(#lrSb)" stroke-width="1"/>
<rect x="268.75" y="592.13" width="4.1" height="24.17" fill="url(#lrb)" stroke="url(#lrSb)" stroke-width="1"/>
<rect x="279.89" y="604.37" width="4.1" height="11.93" fill="url(#lrb)" stroke="url(#lrSb)" stroke-width="1"/>
<rect x="291.03" y="604.37" width="4.1" height="11.93" fill="url(#lrb)" stroke="url(#lrSb)" stroke-width="1"/>
<rect x="302.16" y="593.87" width="4.1" height="22.43" fill="url(#lrb)" stroke="url(#lrSb)" stroke-width="1"/>
<text x="40.3" y="626.8" class="al">0</text>
<text x="51.44" y="626.8" class="al">1</text>
<text x="62.58" y="626.8" class="al">2</text>
<text x="73.71" y="626.8" class="al">3</text>
<text x="84.85" y="626.8" class="al">4</text>
<text x="95.99" y="626.8" class="al">5</text>
<text x="107.13" y="626.8" class="al">6</text>
<text x="118.26" y="626.8" class="al">7</text>
<text x="129.4" y="626.8" class="al">8</text>
<text x="140.54" y="626.8" class="al">9</text>
<text x="151.68" y="626.8" class="al">10</text>
<text x="162.81" y="626.8" class="al">11</text>
<text x="173.95" y="626.8" class="al">12</text>
<text x="185.09" y="626.8" class="al">13</text>
<text x="196.22" y="626.8" class="al">14</text>
<text x="207.36" y="626.8" class="al">15</text>
<text x="218.5" y="626.8" class="al">16</text>
<text x="229.64" y="626.8" class="al">17</text>
<text x="240.78" y="626.8" class="al">18</text>
<text x="251.91" y="626.8" class="al">19</text>
<text x="263.05" y="626.8" class="al">20</text>
<text x="274.19" y="626.8" class="al">21</text>
<text x="285.32" y="626.8" class="al">22</text>
<text x="296.46" y="626.8" class="al">23</text>
<text x="378.5" y="498.25" class="ct">Profits and losses by weekdays</text>
<line x1="374.5" y1="504.45" x2="639.6" y2="504.45" stroke="#c0c0c0" stroke-width="1"/>
<line x1="374.5" y1="518.43" x2="639.6" y2="518.43" stroke="#c0c0c0" stroke-width="1"/>
<line x1="374.5" y1="532.41" x2="639.6" y2="532.41" stroke="#c0c0c0" stroke-width="1"/>
<line x1="374.5" y1="546.39" x2="639.6" y2="546.39" stroke="#c0c0c0" stroke-width="1"/>
<line x1="374.5" y1="560.38" x2="639.6" y2="560.38" stroke="#c0c0c0" stroke-width="1"/>
<line x1="374.5" y1="574.36" x2="639.6" y2="574.36" stroke="#c0c0c0" stroke-width="1"/>
<line x1="374.5" y1="588.34" x2="639.6" y2="588.34" stroke="#c0c0c0" stroke-width="1"/>
<line x1="374.5" y1="602.32" x2="639.6" y2="602.32" stroke="#c0c0c0" stroke-width="1"/>
<line x1="374.5" y1="616.3" x2="639.6" y2="616.3" stroke="#979797" stroke-width="1"/>
<line x1="379.8" y1="503.95" x2="379.8" y2="620.3" stroke="#979797" stroke-width="1"/>
<line x1="416.96" y1="616.3" x2="416.96" y2="620.8" stroke="#a0a0a0" stroke-width="1"/>
<line x1="454.11" y1="616.3" x2="454.11" y2="620.8" stroke="#a0a0a0" stroke-width="1"/>
<line x1="491.27" y1="616.3" x2="491.27" y2="620.8" stroke="#a0a0a0" stroke-width="1"/>
<line x1="528.43" y1="616.3" x2="528.43" y2="620.8" stroke="#a0a0a0" stroke-width="1"/>
<line x1="565.59" y1="616.3" x2="565.59" y2="620.8" stroke="#a0a0a0" stroke-width="1"/>
<line x1="602.74" y1="616.3" x2="602.74" y2="620.8" stroke="#a0a0a0" stroke-width="1"/>
<text x="369.5" y="506.15" class="al yl" text-anchor="end">4000</text>
<text x="369.5" y="520.13" class="al yl" text-anchor="end">3500</text>
<text x="369.5" y="534.11" class="al yl" text-anchor="end">3000</text>
<text x="369.5" y="548.09" class="al yl" text-anchor="end">2500</text>
<text x="369.5" y="562.08" class="al yl" text-anchor="end">2000</text>
<text x="369.5" y="576.06" class="al yl" text-anchor="end">1500</text>
<text x="369.5" y="590.04" class="al yl" text-anchor="end">1000</text>
<text x="369.5" y="604.02" class="al yl" text-anchor="end">500</text>
<text x="369.5" y="618" class="al yl" text-anchor="end">0</text>
<rect x="426.16" y="548.8" width="8.9" height="67.5" fill="url(#blb)" stroke="url(#blSb)" stroke-width="1"/>
<rect x="463.31" y="529.22" width="8.9" height="87.08" fill="url(#blb)" stroke="url(#blSb)" stroke-width="1"/>
<rect x="500.47" y="540.18" width="8.9" height="76.12" fill="url(#blb)" stroke="url(#blSb)" stroke-width="1"/>
<rect x="537.63" y="547.15" width="8.9" height="69.15" fill="url(#blb)" stroke="url(#blSb)" stroke-width="1"/>
<rect x="574.79" y="531.54" width="8.9" height="84.76" fill="url(#blb)" stroke="url(#blSb)" stroke-width="1"/>
<rect x="436.16" y="568.34" width="8.9" height="47.96" fill="url(#lrb)" stroke="url(#lrSb)" stroke-width="1"/>
<rect x="473.31" y="568.98" width="8.9" height="47.32" fill="url(#lrb)" stroke="url(#lrSb)" stroke-width="1"/>
<rect x="510.47" y="552.4" width="8.9" height="63.9" fill="url(#lrb)" stroke="url(#lrSb)" stroke-width="1"/>
<rect x="547.63" y="507.61" width="8.9" height="108.69" fill="url(#lrb)" stroke="url(#lrSb)" stroke-width="1"/>
<rect x="584.79" y="539.12" width="8.9" height="77.18" fill="url(#lrb)" stroke="url(#lrSb)" stroke-width="1"/>
<text x="389.2" y="626.8" class="al">Sun</text>
<text x="426.36" y="626.8" class="al">Mon</text>
<text x="463.51" y="626.8" class="al">Tue</text>
<text x="500.67" y="626.8" class="al">Wed</text>
<text x="537.83" y="626.8" class="al">Thu</text>
<text x="574.99" y="626.8" class="al">Fri</text>
<text x="612.14" y="626.8" class="al">Sat</text>
<text x="718.8" y="498.25" class="ct">Profits and losses by months</text>
<line x1="714.8" y1="504.45" x2="998.6" y2="504.45" stroke="#c0c0c0" stroke-width="1"/>
<line x1="714.8" y1="518.43" x2="998.6" y2="518.43" stroke="#c0c0c0" stroke-width="1"/>
<line x1="714.8" y1="532.41" x2="998.6" y2="532.41" stroke="#c0c0c0" stroke-width="1"/>
<line x1="714.8" y1="546.39" x2="998.6" y2="546.39" stroke="#c0c0c0" stroke-width="1"/>
<line x1="714.8" y1="560.38" x2="998.6" y2="560.38" stroke="#c0c0c0" stroke-width="1"/>
<line x1="714.8" y1="574.36" x2="998.6" y2="574.36" stroke="#c0c0c0" stroke-width="1"/>
<line x1="714.8" y1="588.34" x2="998.6" y2="588.34" stroke="#c0c0c0" stroke-width="1"/>
<line x1="714.8" y1="602.32" x2="998.6" y2="602.32" stroke="#c0c0c0" stroke-width="1"/>
<line x1="714.8" y1="616.3" x2="998.6" y2="616.3" stroke="#979797" stroke-width="1"/>
<line x1="720.1" y1="503.95" x2="720.1" y2="620.3" stroke="#979797" stroke-width="1"/>
<line x1="743.33" y1="616.3" x2="743.33" y2="620.8" stroke="#a0a0a0" stroke-width="1"/>
<line x1="766.57" y1="616.3" x2="766.57" y2="620.8" stroke="#a0a0a0" stroke-width="1"/>
<line x1="789.8" y1="616.3" x2="789.8" y2="620.8" stroke="#a0a0a0" stroke-width="1"/>
<line x1="813.03" y1="616.3" x2="813.03" y2="620.8" stroke="#a0a0a0" stroke-width="1"/>
<line x1="836.27" y1="616.3" x2="836.27" y2="620.8" stroke="#a0a0a0" stroke-width="1"/>
<line x1="859.5" y1="616.3" x2="859.5" y2="620.8" stroke="#a0a0a0" stroke-width="1"/>
<line x1="882.73" y1="616.3" x2="882.73" y2="620.8" stroke="#a0a0a0" stroke-width="1"/>
<line x1="905.97" y1="616.3" x2="905.97" y2="620.8" stroke="#a0a0a0" stroke-width="1"/>
<line x1="929.2" y1="616.3" x2="929.2" y2="620.8" stroke="#a0a0a0" stroke-width="1"/>
<line x1="952.43" y1="616.3" x2="952.43" y2="620.8" stroke="#a0a0a0" stroke-width="1"/>
<line x1="975.67" y1="616.3" x2="975.67" y2="620.8" stroke="#a0a0a0" stroke-width="1"/>
<text x="709.8" y="506.15" class="al yl" text-anchor="end">2100</text>
<text x="709.8" y="562.08" class="al yl" text-anchor="end">1050</text>
<text x="709.8" y="618" class="al yl" text-anchor="end">0</text>
<rect x="725.9" y="507.24" width="5.1" height="109.06" fill="url(#blb)" stroke="url(#blSb)" stroke-width="1"/>
<rect x="749.13" y="538.13" width="5.1" height="78.17" fill="url(#blb)" stroke="url(#blSb)" stroke-width="1"/>
<rect x="772.37" y="535.47" width="5.1" height="80.83" fill="url(#blb)" stroke="url(#blSb)" stroke-width="1"/>
<rect x="795.6" y="541.75" width="5.1" height="74.55" fill="url(#blb)" stroke="url(#blSb)" stroke-width="1"/>
<rect x="818.83" y="557.04" width="5.1" height="59.26" fill="url(#blb)" stroke="url(#blSb)" stroke-width="1"/>
<rect x="842.07" y="563.33" width="5.1" height="52.97" fill="url(#blb)" stroke="url(#blSb)" stroke-width="1"/>
<rect x="865.3" y="569.98" width="5.1" height="46.32" fill="url(#blb)" stroke="url(#blSb)" stroke-width="1"/>
<rect x="888.53" y="563.33" width="5.1" height="52.97" fill="url(#blb)" stroke="url(#blSb)" stroke-width="1"/>
<rect x="911.77" y="580.26" width="5.1" height="36.04" fill="url(#blb)" stroke="url(#blSb)" stroke-width="1"/>
<rect x="935" y="573.98" width="5.1" height="42.32" fill="url(#blb)" stroke="url(#blSb)" stroke-width="1"/>
<rect x="958.23" y="561.67" width="5.1" height="54.63" fill="url(#blb)" stroke="url(#blSb)" stroke-width="1"/>
<rect x="981.47" y="571.95" width="5.1" height="44.35" fill="url(#blb)" stroke="url(#blSb)" stroke-width="1"/>
<rect x="732.2" y="547.45" width="5.1" height="68.85" fill="url(#lrb)" stroke="url(#lrSb)" stroke-width="1"/>
<rect x="755.43" y="540.16" width="5.1" height="76.14" fill="url(#lrb)" stroke="url(#lrSb)" stroke-width="1"/>
<rect x="778.67" y="563.38" width="5.1" height="52.92" fill="url(#lrb)" stroke="url(#lrSb)" stroke-width="1"/>
<rect x="801.9" y="515.28" width="5.1" height="101.02" fill="url(#lrb)" stroke="url(#lrSb)" stroke-width="1"/>
<rect x="825.13" y="564.71" width="5.1" height="51.59" fill="url(#lrb)" stroke="url(#lrSb)" stroke-width="1"/>
<rect x="848.37" y="590.28" width="5.1" height="26.02" fill="url(#lrb)" stroke="url(#lrSb)" stroke-width="1"/>
<rect x="871.6" y="579.68" width="5.1" height="36.62" fill="url(#lrb)" stroke="url(#lrSb)" stroke-width="1"/>
<rect x="894.83" y="542.13" width="5.1" height="74.17" fill="url(#lrb)" stroke="url(#lrSb)" stroke-width="1"/>
<rect x="918.07" y="584.95" width="5.1" height="31.35" fill="url(#lrb)" stroke="url(#lrSb)" stroke-width="1"/>
<rect x="941.3" y="590.28" width="5.1" height="26.02" fill="url(#lrb)" stroke="url(#lrSb)" stroke-width="1"/>
<rect x="964.53" y="552.46" width="5.1" height="63.84" fill="url(#lrb)" stroke="url(#lrSb)" stroke-width="1"/>
<rect x="987.77" y="568.7" width="5.1" height="47.6" fill="url(#lrb)" stroke="url(#lrSb)" stroke-width="1"/>
<text x="725.9" y="626.8" class="al">Jan</text>
<text x="749.13" y="626.8" class="al">Feb</text>
<text x="772.37" y="626.8" class="al">Mar</text>
<text x="795.6" y="626.8" class="al">Apr</text>
<text x="818.83" y="626.8" class="al">May</text>
<text x="842.07" y="626.8" class="al">Jun</text>
<text x="865.3" y="626.8" class="al">Jul</text>
<text x="888.53" y="626.8" class="al">Aug</text>
<text x="911.77" y="626.8" class="al">Sep</text>
<text x="935" y="626.8" class="al">Oct</text>
<text x="958.23" y="626.8" class="al">Nov</text>
<text x="981.47" y="626.8" class="al">Dec</text>
</svg>
<div id="report">
<div class="row" style="top:-0.2px"><span class="l" style="left:3.2px">History Quality</span><span class="v n" style="right:688.1px">57%</span></div>
<div class="row" style="top:16.53px"><span class="l" style="left:3.2px">Bars</span><span class="v n" style="right:688.1px">14554</span><span class="l" style="left:343.5px">Ticks</span><span class="v n" style="right:348.1px">64685589</span><span class="l" style="left:684px">Symbols</span><span class="v n" style="right:4.4px">1</span></div>
<div class="row" style="top:33.26px"><span class="l" style="left:3.2px">Initial Deposit</span><span class="v n" style="right:688.1px">10 000.00</span></div>
<div class="row" style="top:49.99px"><span class="l" style="left:3.2px">Total Net Profit</span><span class="v n" style="right:688.1px">1 415.10</span><span class="l" style="left:343.5px">Balance Drawdown Absolute</span><span class="v n" style="right:348.1px">439.10</span><span class="l" style="left:684px">Equity Drawdown Absolute</span><span class="v n" style="right:4.4px">517.50</span></div>
<div class="row" style="top:66.72px"><span class="l" style="left:3.2px">Gross Profit</span><span class="v n" style="right:688.1px">13 844.30</span><span class="l" style="left:343.5px">Balance Drawdown Maximal</span><span class="v n" style="right:348.1px">794.50 (6.51%)</span><span class="l" style="left:684px">Equity Drawdown Maximal</span><span class="v n" style="right:4.4px">842.30 (6.89%)</span></div>
<div class="row" style="top:83.45px"><span class="l" style="left:3.2px">Gross Loss</span><span class="v n" style="right:688.1px">-12 429.20</span><span class="l" style="left:343.5px">Balance Drawdown Relative</span><span class="v n" style="right:348.1px">6.51% (794.50)</span><span class="l" style="left:684px">Equity Drawdown Relative</span><span class="v n" style="right:4.4px">6.89% (842.30)</span></div>
<div class="row" style="top:100.18px"></div>
<div class="row" style="top:116.91px"><span class="l" style="left:3.2px">Profit Factor</span><span class="v n" style="right:688.1px">1.11</span><span class="l" style="left:343.5px">Expected Payoff</span><span class="v n" style="right:348.1px">3.03</span><span class="l" style="left:684px">Margin Level</span><span class="v n" style="right:4.4px">7687.86%</span></div>
<div class="row" style="top:133.64px"><span class="l" style="left:3.2px">Recovery Factor</span><span class="v n" style="right:688.1px">1.68</span><span class="l" style="left:343.5px">Sharpe Ratio</span><span class="v n" style="right:348.1px">0.96</span><span class="l" style="left:684px">Z-Score</span><span class="v n" style="right:4.4px">0.04 (3.19%)</span></div>
<div class="row" style="top:150.37px"><span class="l" style="left:3.2px">AHPR</span><span class="v n" style="right:688.1px">1.0003 (0.03%)</span><span class="l" style="left:343.5px">LR Correlation</span><span class="v n" style="right:348.1px">0.95</span><span class="l" style="left:684px">OnTester result</span><span class="v n" style="right:4.4px">0</span></div>
<div class="row" style="top:167.1px"><span class="l" style="left:3.2px">GHPR</span><span class="v n" style="right:688.1px">1.0003 (0.03%)</span><span class="l" style="left:343.5px">LR Standard Error</span><span class="v n" style="right:348.1px">202.94</span></div>
<div class="row" style="top:183.83px"></div>
<div class="row" style="top:200.56px"><span class="l" style="left:3.2px">Total Trades</span><span class="v n" style="right:688.1px">467</span><span class="l" style="left:343.5px">Short Trades (won %)</span><span class="v n" style="right:348.1px">234 (71.37%)</span><span class="l" style="left:684px">Long Trades (won %)</span><span class="v n" style="right:4.4px">233 (75.54%)</span></div>
<div class="row" style="top:217.29px"><span class="l" style="left:3.2px">Total Deals</span><span class="v n" style="right:688.1px">934</span><span class="l" style="left:343.5px">Profit Trades (% of total)</span><span class="v n" style="right:348.1px">343 (73.45%)</span><span class="l" style="left:684px">Loss Trades (% of total)</span><span class="v n" style="right:4.4px">124 (26.55%)</span></div>
<div class="row" style="top:234.02px"><span class="v" style="right:688.1px">Largest</span><span class="l" style="left:343.5px">profit trade</span><span class="v n" style="right:348.1px">67.90</span><span class="l" style="left:684px">loss trade</span><span class="v n" style="right:4.4px">-136.80</span></div>
<div class="row" style="top:250.75px"><span class="v" style="right:688.1px">Average</span><span class="l" style="left:343.5px">profit trade</span><span class="v n" style="right:348.1px">40.36</span><span class="l" style="left:684px">loss trade</span><span class="v n" style="right:4.4px">-100.24</span></div>
<div class="row" style="top:267.48px"><span class="v" style="right:688.1px">Maximum</span><span class="l" style="left:343.5px">consecutive wins ($)</span><span class="v n" style="right:348.1px">14 (566.20)</span><span class="l" style="left:684px">consecutive losses ($)</span><span class="v n" style="right:4.4px">3 (-301.10)</span></div>
<div class="row" style="top:284.21px"><span class="v" style="right:688.1px">Maximal</span><span class="l" style="left:343.5px">consecutive profit (count)</span><span class="v n" style="right:348.1px">566.20 (14)</span><span class="l" style="left:684px">consecutive loss (count)</span><span class="v n" style="right:4.4px">-301.10 (3)</span></div>
<div class="row" style="top:300.94px"><span class="v" style="right:688.1px">Average</span><span class="l" style="left:343.5px">consecutive wins</span><span class="v n" style="right:348.1px">4</span><span class="l" style="left:684px">consecutive losses</span><span class="v n" style="right:4.4px">1</span></div>
<div class="row" style="top:317.67px"></div>
</div>
</body>
</html>
